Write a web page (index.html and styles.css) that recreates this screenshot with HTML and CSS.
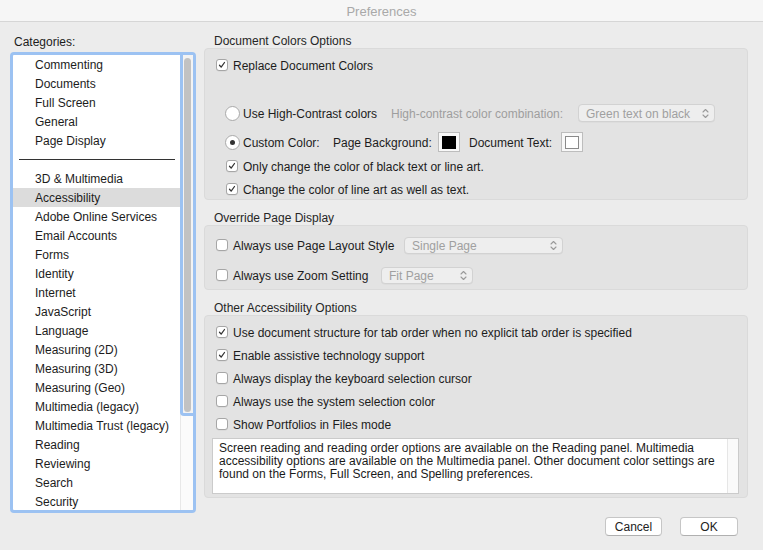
FILE: index.html
```html
<!DOCTYPE html>
<html>
<head>
<meta charset="utf-8">
<title>Preferences</title>
<link rel="stylesheet" href="styles.css">
</head>
<body>
<div class="window">
  <div class="titlebar">Preferences</div>
  <div class="content">
    <div class="left">
      <div class="cat-label">Categories:</div>
      <div class="listbox">
        <ul class="list">
          <li>Commenting</li>
          <li>Documents</li>
          <li>Full Screen</li>
          <li>General</li>
          <li>Page Display</li>
          <li class="sep"><span class="sep-line"></span></li>
          <li>3D &amp; Multimedia</li>
          <li class="selected">Accessibility</li>
          <li>Adobe Online Services</li>
          <li>Email Accounts</li>
          <li>Forms</li>
          <li>Identity</li>
          <li>Internet</li>
          <li>JavaScript</li>
          <li>Language</li>
          <li>Measuring (2D)</li>
          <li>Measuring (3D)</li>
          <li>Measuring (Geo)</li>
          <li>Multimedia (legacy)</li>
          <li>Multimedia Trust (legacy)</li>
          <li>Reading</li>
          <li>Reviewing</li>
          <li>Search</li>
          <li>Security</li>
        </ul>
        <div class="scroller">
          <div class="knob-area"><div class="knob"></div></div>
        </div>
      </div>
    </div>

    <div class="right">
      <div class="section-title">Document Colors Options</div>
      <div class="panel panel-colors">
        <div class="row row-replace">
          <span class="cb checked"><svg viewBox="0 0 12 12"><path d="M3 6.3 L5 8.6 L9 3" /></svg></span>
          <span class="lbl">Replace Document Colors</span>
        </div>
        <div class="row row-hc indent">
          <span class="radio"></span>
          <span class="lbl w-hc">Use High-Contrast colors</span>
          <span class="lbl disabled w-combo">High-contrast color combination:</span>
          <span class="popup popup-green"><span class="ptext">Green text on black</span><svg class="chev" viewBox="0 0 7 11"><path d="M1 4 L3.5 1.5 L6 4 M1 7 L3.5 9.5 L6 7"/></svg></span>
        </div>
        <div class="row row-custom indent">
          <span class="radio on"></span>
          <span class="lbl w-custom">Custom Color:</span>
          <span class="lbl w-pagebg">Page Background:</span>
          <span class="swatch"><span class="sw-inner black"></span></span>
          <span class="lbl w-doctext">Document Text:</span>
          <span class="swatch"><span class="sw-inner white"></span></span>
        </div>
        <div class="row row-only indent2">
          <span class="cb checked"><svg viewBox="0 0 12 12"><path d="M3 6.3 L5 8.6 L9 3" /></svg></span>
          <span class="lbl">Only change the color of black text or line art.</span>
        </div>
        <div class="row row-change indent2">
          <span class="cb checked"><svg viewBox="0 0 12 12"><path d="M3 6.3 L5 8.6 L9 3" /></svg></span>
          <span class="lbl">Change the color of line art as well as text.</span>
        </div>
      </div>

      <div class="section-title">Override Page Display</div>
      <div class="panel panel-override">
        <div class="row row-layout">
          <span class="opt w-layout"><span class="cb"></span><span class="lbl">Always use Page Layout Style</span></span>
          <span class="popup popup-single"><span class="ptext">Single Page</span><svg class="chev" viewBox="0 0 7 11"><path d="M1 4 L3.5 1.5 L6 4 M1 7 L3.5 9.5 L6 7"/></svg></span>
        </div>
        <div class="row row-zoom">
          <span class="opt w-zoom"><span class="cb"></span><span class="lbl">Always use Zoom Setting</span></span>
          <span class="popup popup-fit"><span class="ptext">Fit Page</span><svg class="chev" viewBox="0 0 7 11"><path d="M1 4 L3.5 1.5 L6 4 M1 7 L3.5 9.5 L6 7"/></svg></span>
        </div>
      </div>

      <div class="section-title">Other Accessibility Options</div>
      <div class="panel panel-other">
        <div class="row row-first">
          <span class="cb checked"><svg viewBox="0 0 12 12"><path d="M3 6.3 L5 8.6 L9 3" /></svg></span>
          <span class="lbl">Use document structure for tab order when no explicit tab order is specified</span>
        </div>
        <div class="row row-next">
          <span class="cb checked"><svg viewBox="0 0 12 12"><path d="M3 6.3 L5 8.6 L9 3" /></svg></span>
          <span class="lbl">Enable assistive technology support</span>
        </div>
        <div class="row row-next">
          <span class="cb"></span>
          <span class="lbl">Always display the keyboard selection cursor</span>
        </div>
        <div class="row row-next">
          <span class="cb"></span>
          <span class="lbl">Always use the system selection color</span>
        </div>
        <div class="row row-next">
          <span class="cb"></span>
          <span class="lbl">Show Portfolios in Files mode</span>
        </div>
        <div class="note">
          <div class="note-text">Screen reading and reading order options are available on the Reading panel. Multimedia<br>accessibility options are available on the Multimedia panel. Other document color settings are<br>found on the Forms, Full Screen, and Spelling preferences.</div>
          <div class="note-scroll"></div>
        </div>
      </div>
    </div>
  </div>
  <div class="footer">
    <button class="btn btn-cancel">Cancel</button>
    <button class="btn btn-ok">OK</button>
  </div>
</div>
</body>
</html>
```

FILE: styles.css
```css
* { box-sizing: border-box; }
html, body { margin: 0; padding: 0; }
body {
  background: #ececec;
  font-family: "Liberation Sans", Arial, sans-serif;
  font-size: 12px;
  color: #1c1c1c;
}
.window {
  width: 763px;
  height: 550px;
  display: flex;
  flex-direction: column;
  overflow: hidden;
}
.titlebar {
  height: 22px;
  line-height: 21px;
  padding-top: 1px;
  text-align: center;
  color: #a9a9a9;
  background: #f6f6f6;
  border-bottom: 1px solid #d6d6d6;
  font-size: 13px;
}
.content {
  display: flex;
  gap: 8px;
  height: 491px;
}
.left {
  width: 186px;
  margin-left: 10px;
}
.cat-label {
  margin-top: 11px;
  height: 16px;
  line-height: 16px;
  padding: 1px 0 0 4px;
  margin-bottom: 3px;
}
.listbox {
  height: 461px;
  border: 3px solid #9cc2f2;
  border-radius: 4px;
  background: #fff;
  display: flex;
  overflow: hidden;
}
.list {
  list-style: none;
  margin: 0;
  padding: 0;
  width: 167px;
  flex: none;
}
.list li {
  height: 19px;
  line-height: 19px;
  padding: 1px 0 0 22px;
  white-space: nowrap;
}
.list li.selected { background: #dcdcdc; }
.list li.sep { display: flex; align-items: center; padding: 0 0 0 6px; }
.sep-line { display: block; width: 156px; height: 1px; background: #333; }
.scroller {
  width: 13px;
  flex: none;
  background: #fbfbfb;
  border-left: 1px solid #e8e8e8;
}
.knob-area {
  margin-left: -1px;
  height: 361px;
  border-left: 3px solid #9cc2f2;
  border-bottom: 3px solid #9cc2f2;
  border-bottom-left-radius: 4px;
  background: #f3f3f3;
  padding: 3px 0 0 1px;
}
.knob {
  width: 7px;
  height: 354px;
  border-radius: 4px;
  background: #c2c2c2;
}

.right {
  width: 544px;
}
.section-title {
  height: 15px;
  line-height: 15px;
  padding: 1px 0 0 10px;
  margin-top: 10px;
  color: #262626;
}
.right > .section-title:first-child { margin-top: 11px; }
.panel {
  background: #e3e3e3;
  border: 1px solid #dadada;
  border-radius: 4px;
  padding-left: 11px;
}
.panel-colors { height: 152px; padding-top: 6px; }
.panel-override { height: 65px; padding-top: 9px; }
.panel-other { height: 183px; padding-top: 6px; padding-left: 11px; }

.row {
  display: flex;
  align-items: center;
  height: 20px;
  white-space: nowrap;
}
.lbl { padding-top: 2px; }
.row .cb + .lbl { margin-left: 5px; }
.indent { padding-left: 9px; }
.indent2 { padding-left: 10px; }
.row-hc { margin-top: 28px; }
.row-custom { margin-top: 9px; }
.row-only { margin-top: 4px; }
.row-change { margin-top: 3px; }
.row-zoom { margin-top: 10px; }
.row-next { margin-top: 3px; }

.cb {
  width: 12px;
  height: 12px;
  flex: none;
  background: #fff;
  border: 1px solid #a6a6a6;
  border-radius: 3px;
  box-shadow: 0 0.5px 0.5px rgba(0,0,0,0.08);
  display: inline-flex;
}
.cb svg { width: 10px; height: 10px; }
.cb svg path { fill: none; stroke: #333; stroke-width: 1.5; stroke-linecap: round; stroke-linejoin: round; }
.radio {
  width: 15px;
  height: 15px;
  flex: none;
  border-radius: 50%;
  background: #fff;
  border: 1px solid #a9a9a9;
  margin-right: 3px;
  display: inline-flex;
  align-items: center;
  justify-content: center;
}
.radio.on::after {
  content: "";
  width: 5px;
  height: 5px;
  border-radius: 50%;
  background: #333;
}
.lbl.disabled { color: #9e9e9e; }
.w-hc { width: 148px; }
.w-combo { width: 187px; }
.w-custom { width: 90px; }
.w-pagebg { width: 105px; }
.w-doctext { width: 101px; padding-left: 9px; }

.popup {
  display: inline-flex;
  align-items: center;
  justify-content: space-between;
  height: 18px;
  background: #eeeeee;
  border: 1px solid #d2d2d2;
  border-radius: 4px;
  padding: 0 5px 0 7px;
  color: #a0a0a0;
  box-shadow: 0 0.5px 0 rgba(0,0,0,0.05);
}
.ptext { padding-top: 2px; }
.chev { width: 7px; height: 11px; }
.chev path { fill: none; stroke: #9a9a9a; stroke-width: 1.1; stroke-linecap: round; stroke-linejoin: round; }
.popup-green { width: 137px; }
.popup-single { width: 159px; height: 17px; }
.popup-fit { width: 92px; height: 17px; }

.swatch {
  width: 22px;
  height: 20px;
  flex: none;
  background: #f8f8f8;
  border: 1px solid #bdbdbd;
  display: inline-flex;
  align-items: center;
  justify-content: center;
}
.sw-inner { width: 14px; height: 13px; }
.sw-inner.black { background: #000; }
.sw-inner.white { background: #fff; border: 1px solid #8a8a8a; }

.opt { display: inline-flex; align-items: center; }
.w-layout { width: 188px; }
.w-zoom { width: 165px; }

.note {
  margin: 4px 0 0 -4px;
  width: 527px;
  height: 56px;
  background: #fff;
  border: 1px solid #cbcbcb;
  display: flex;
}
.note-text {
  flex: 1;
  font-size: 12px;
  line-height: 13px;
  padding: 3px 0 0 6px;
  white-space: nowrap;
  color: #1a1a1a;
}
.note-scroll {
  width: 11px;
  background: #fafafa;
  border-left: 1px solid #e6e6e6;
}

.footer {
  display: flex;
  justify-content: flex-end;
  gap: 18px;
  padding: 4px 25px 0 0;
}
.btn {
  height: 19px;
  font-family: "Liberation Sans", Arial, sans-serif;
  font-size: 12px;
  color: #222;
  background: #fff;
  border: 1px solid #c6c6c6;
  border-bottom-color: #b0b0b0;
  border-radius: 4px;
  padding: 1px 0 0;
  line-height: 16px;
}
.btn-cancel { width: 57px; }
.btn-ok { width: 58px; }
```
